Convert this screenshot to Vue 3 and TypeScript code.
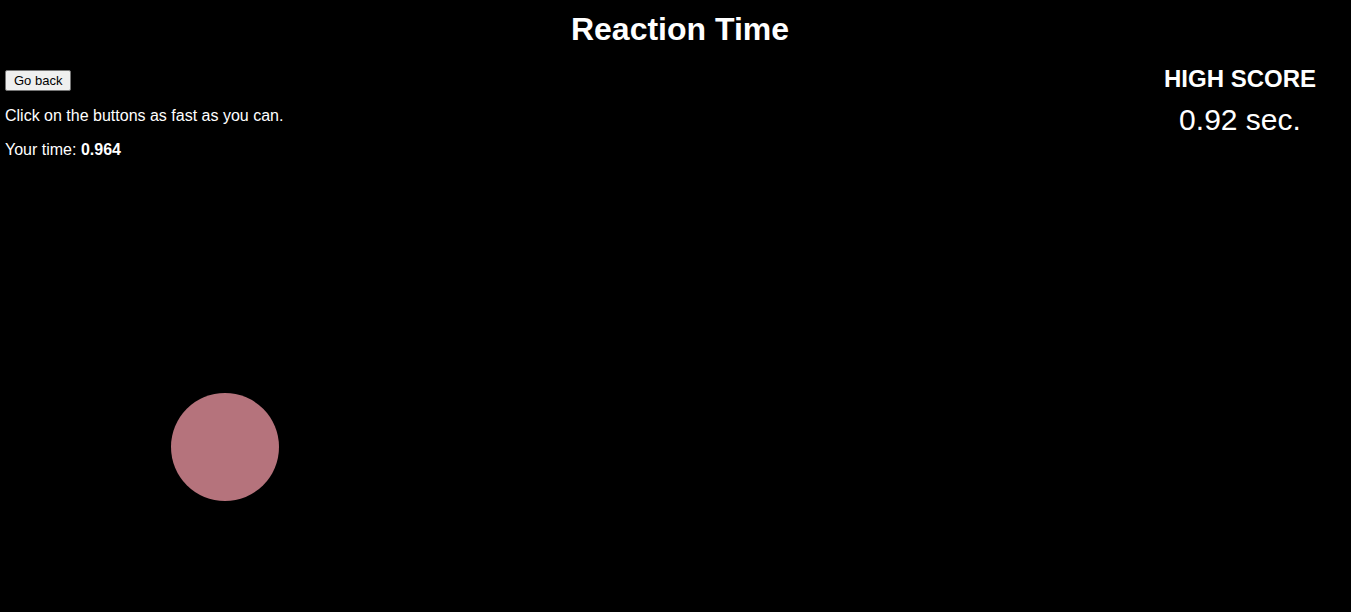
<script setup lang="ts">
import { ref } from 'vue'

interface Target {
  x: number
  y: number
  size: number
  color: string
}

const target = ref<Target>({ x: 166, y: 234, size: 108, color: '#b5737c' })
const time = ref('0.964')
const highScore = ref('0.92')
const shownAt = ref(Date.now())

function hit(): void {
  time.value = String((Date.now() - shownAt.value) / 1000)
  if (Number(time.value) < Number(highScore.value)) highScore.value = time.value
  const size = 60 + Math.round(Math.random() * 90)
  target.value = {
    x: Math.round(Math.random() * 900),
    y: Math.round(Math.random() * 260),
    size,
    color: `hsl(${Math.round(Math.random() * 360)} 31% 58%)`,
  }
  shownAt.value = Date.now()
}

function goBack(): void {
  window.history.back()
}
</script>

<template>
  <main class="page">
    <h1 class="title">Reaction Time</h1>
    <div class="info">
      <section class="intro">
        <button type="button" class="back" @click="goBack">Go back</button>
        <p>Click on the buttons as fast as you can.</p>
        <p>Your time: <strong>{{ time }}</strong></p>
      </section>
      <section class="score">
        <h2>HIGH SCORE</h2>
        <p>{{ highScore }} sec.</p>
      </section>
    </div>
    <div class="field">
      <button
        type="button"
        class="target"
        aria-label="Target"
        :style="{
          left: target.x + 'px',
          top: target.y + 'px',
          width: target.size + 'px',
          height: target.size + 'px',
          background: target.color,
        }"
        @click="hit"
      ></button>
    </div>
  </main>
</template>

<style>
body {
  margin: 0;
  background: #000;
}
</style>

<style scoped>
.page {
  box-sizing: border-box;
  display: flex;
  flex-direction: column;
  min-height: 100vh;
  padding: 11px 0 0 5px;
  background: #000;
  color: #fff;
  font: 16px/18px "Liberation Sans", Arial, sans-serif;
}

.title {
  margin: 0;
  padding-left: 4px;
  font-size: 32px;
  line-height: 37px;
  text-align: center;
}

.info {
  display: flex;
  justify-content: space-between;
  padding: 17px 35px 0 0;
}

.intro {
  display: flex;
  flex-direction: column;
  align-items: flex-start;
  gap: 16px;
  padding-top: 5px;
}

.intro p {
  margin: 0;
}

.back {
  box-sizing: border-box;
  height: 21px;
  padding: 1px 8px;
  border: 1px solid #767676;
  border-radius: 2px;
  background: #efefef;
  color: #000;
  font: 13px/17px "Liberation Sans", Arial, sans-serif;
}

.score {
  text-align: center;
}

.score h2 {
  margin: 0;
  font-size: 24px;
  line-height: 27px;
}

.score p {
  margin: 11px 0 0;
  font-size: 30px;
  line-height: 34px;
}

.field {
  position: relative;
  flex: 1;
}

.target {
  position: absolute;
  padding: 0;
  border: 0;
  border-radius: 50%;
  cursor: pointer;
}
</style>
